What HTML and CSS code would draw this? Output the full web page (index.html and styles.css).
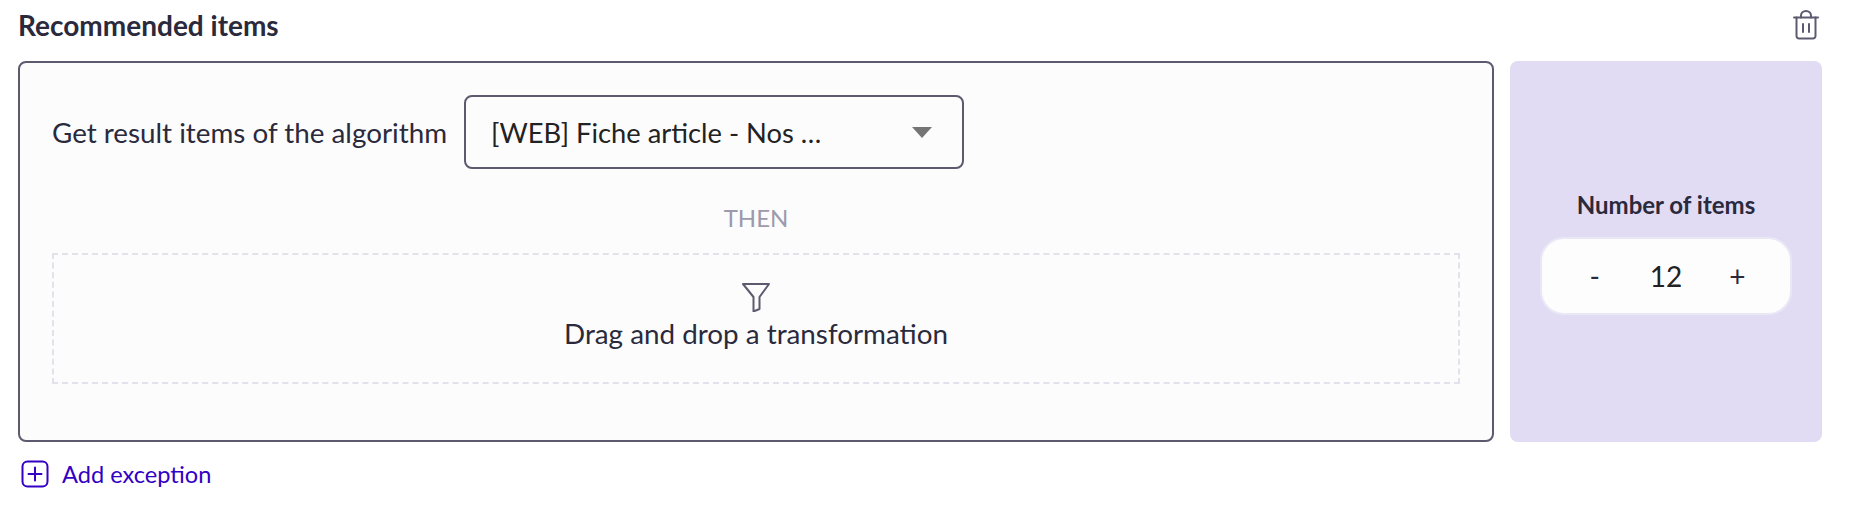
FILE: index.html
```html
<!DOCTYPE html>
<html lang="en">
<head>
    <meta charset="UTF-8">
    <meta name="viewport" content="width=device-width, initial-scale=1.0">
    <title>Recommended items</title>
    <link rel="stylesheet" href="styles.css">
</head>
<body>
    <div class="header">
        <h2 class="title">Recommended items</h2>
        <svg class="trash" width="26" height="30" viewBox="0 0 26 30" fill="none" stroke="#5d5a70" stroke-width="2" stroke-linecap="round" stroke-linejoin="round">
            <path d="M1 7.500h24"/>
            <path d="M8 7.500V5.500a5 4.500 0 0 1 10 0v2"/>
            <path d="M3.500 7.500V26a2.500 2.500 0 0 0 2.500 2.500h14a2.500 2.500 0 0 0 2.500-2.500V7.500"/>
            <path d="M10 14v8M16 14v8"/>
        </svg>
    </div>
    <div class="row">
        <div class="main-box">
            <div class="algo-line">
                <span class="label">Get result items of the algorithm</span>
                <div class="dropdown">
                    <span>[WEB] Fiche article - Nos …</span>
                    <span class="arrow"></span>
                </div>
            </div>
            <div class="then">THEN</div>
            <div class="dropzone">
                <svg width="30" height="30" viewBox="0 0 30 30" fill="none" stroke="#5d5a70" stroke-width="2" stroke-linejoin="round">
                    <path d="M2 2h26L18.500 15v12l-6 2.500V15z"/>
                </svg>
                <span class="drop-text">Drag and drop a transformation</span>
            </div>
        </div>
        <div class="side-panel">
            <div class="side-title">Number of items</div>
            <div class="stepper">
                <span class="step">-</span>
                <span class="count">12</span>
                <span class="step">+</span>
            </div>
        </div>
    </div>
    <a class="add-link" href="#">
        <svg width="28" height="28" viewBox="0 0 28 28" fill="none" stroke="#3300c4" stroke-width="2" stroke-linecap="round">
            <rect x="1.500" y="1.500" width="25" height="25" rx="5"/>
            <path d="M14 7.500v13M7.500 14h13"/>
        </svg>
        Add exception
    </a>
</body>
</html>
```

FILE: styles.css
```css
body {
    font-family: Lato, sans-serif;
    background-color: #fff;
    color: #2a2a3c;
    margin: 0;
    padding: 7px 30px 0 18px;
}

.header {
    display: flex;
    justify-content: space-between;
    align-items: center;
    height: 36px;
    padding-right: 3px;
}

.title {
    margin: 0;
    font-size: 28px;
    font-weight: 700;
}

.row {
    display: flex;
    gap: 16px;
    margin-top: 18px;
}

.main-box {
    flex: 1;
    height: 381px;
    box-sizing: border-box;
    padding: 32px 32px 0;
    background-color: #fcfcfc;
    border: 2px solid #5d5a70;
    border-radius: 8px;
}

.algo-line {
    display: flex;
    align-items: center;
    gap: 17px;
}

.label {
    font-size: 27.800px;
}

.dropdown {
    width: 500px;
    height: 74px;
    box-sizing: border-box;
    padding: 0 30px 0 25px;
    display: flex;
    justify-content: space-between;
    align-items: center;
    font-size: 27.300px;
    color: #222;
    border: 2px solid #5d5a70;
    border-radius: 8px;
}

.arrow {
    width: 0;
    height: 0;
    border-left: 10px solid transparent;
    border-right: 10px solid transparent;
    border-top: 11px solid #757575;
}

.then {
    margin-top: 31px;
    height: 36px;
    line-height: 36px;
    text-align: center;
    font-size: 24px;
    color: #9c9aac;
}

.dropzone {
    height: 131px;
    box-sizing: border-box;
    margin-top: 17px;
    padding-top: 27px;
    display: flex;
    flex-direction: column;
    align-items: center;
    gap: 5px;
    border: 2px dashed #e2e1ec;
}

.drop-text {
    font-size: 27.800px;
}

.side-panel {
    width: 312px;
    height: 381px;
    display: flex;
    flex-direction: column;
    align-items: center;
    justify-content: center;
    gap: 18px;
    background-color: #e1dcf4;
    border-radius: 8px;
    padding-top: 1px;
    box-sizing: border-box;
}

.side-title {
    font-size: 24px;
    font-weight: 700;
}

.stepper {
    width: 252px;
    height: 78px;
    box-sizing: border-box;
    padding: 0 17px;
    display: grid;
    grid-template-columns: 1fr 1fr 1fr;
    align-items: center;
    justify-items: center;
    background-color: #fdfdfd;
    border: 2px solid #eae8f5;
    border-radius: 24px;
}

.count {
    font-size: 28px;
    color: #222;
}

.step {
    font-size: 28px;
}

.add-link {
    display: inline-flex;
    align-items: center;
    gap: 13px;
    margin-top: 18px;
    margin-left: 3px;
    font-size: 23.600px;
    color: #3300c4;
    text-decoration: none;
}
```
